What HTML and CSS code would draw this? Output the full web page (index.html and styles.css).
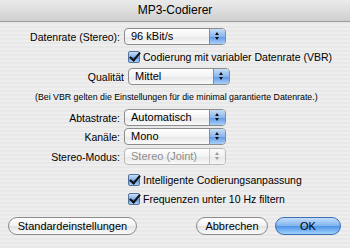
FILE: index.html
```html
<!DOCTYPE html>
<html lang="de">
<head>
    <meta charset="UTF-8">
    <title>MP3-Codierer</title>
    <link rel="stylesheet" href="styles.css">
</head>
<body>
    <div class="window">
        <div class="titlebar">MP3-Codierer</div>
        <div class="content">
            <div class="row r-rate">
                <span class="label">Datenrate (Stereo):</span>
                <div class="popup"><span>96 kBit/s</span><i class="arrows"></i></div>
            </div>
            <div class="row r-vbr">
                <span class="check"></span><span>Codierung mit variabler Datenrate (VBR)</span>
            </div>
            <div class="row r-quality">
                <span class="label">Qualität</span>
                <div class="popup"><span>Mittel</span><i class="arrows"></i></div>
            </div>
            <p class="note">(Bei VBR gelten die Einstellungen für die minimal garantierte Datenrate.)</p>
            <div class="row r-sample">
                <span class="label">Abtastrate:</span>
                <div class="popup"><span>Automatisch</span><i class="arrows"></i></div>
            </div>
            <div class="row r-chan">
                <span class="label">Kanäle:</span>
                <div class="popup"><span>Mono</span><i class="arrows"></i></div>
            </div>
            <div class="row r-stereo">
                <span class="label">Stereo-Modus:</span>
                <div class="popup disabled"><span>Stereo (Joint)</span><i class="arrows"></i></div>
            </div>
            <div class="row r-smart">
                <span class="check"></span><span>Intelligente Codierungsanpassung</span>
            </div>
            <div class="row r-filter">
                <span class="check"></span><span>Frequenzen unter 10 Hz filtern</span>
            </div>
            <div class="buttons">
                <button class="btn btn-default">Standardeinstellungen</button>
                <span class="spacer"></span>
                <button class="btn btn-cancel">Abbrechen</button>
                <button class="btn btn-ok">OK</button>
            </div>
        </div>
    </div>
</body>
</html>
```

FILE: styles.css
```css
body {
    margin: 0;
    font-family: 'Liberation Sans', Arial, sans-serif;
    font-size: 10.5px;
    color: #000;
}
.window {
    width: 350px;
    height: 248px;
    background-color: #ececec;
    background-image: repeating-linear-gradient(to bottom, #eeeeee 0, #eeeeee 2px, #e8e8e8 2px, #e8e8e8 4px);
    overflow: hidden;
    white-space: nowrap;
}
.titlebar {
    height: 21px;
    line-height: 21px;
    text-align: center;
    font-size: 12px;
    background: linear-gradient(to bottom, #ebebeb, #cfcfcf);
    border-bottom: 1px solid #9a9a9a;
}
.content {
    padding-top: 6px;
}
.row {
    display: flex;
    align-items: center;
    height: 17px;
}
.label {
    width: 124px;
    text-align: right;
    padding-right: 4px;
    box-sizing: border-box;
    flex: none;
}
.popup {
    width: 102px;
    height: 17px;
    box-sizing: border-box;
    border: 1px solid #8c8c8c;
    border-radius: 4px;
    background: linear-gradient(to bottom, #ffffff, #f3f3f3 50%, #e6e6e6 51%, #fafafa);
    display: flex;
    align-items: center;
    overflow: hidden;
    flex: none;
    font-size: 11px;
}
.popup span {
    padding-left: 6px;
    flex: 1;
    line-height: 15px;
}
.arrows {
    width: 15px;
    height: 15px;
    border-left: 1px solid #6f8fb8;
    background: linear-gradient(to bottom, #c6dcf7, #8cb6ec 50%, #5e96e2 51%, #a9d0fb);
    position: relative;
    flex: none;
}
.arrows::before, .arrows::after {
    content: "";
    position: absolute;
    left: 5px;
    border-left: 2.5px solid transparent;
    border-right: 2.5px solid transparent;
}
.arrows::before {
    top: 3px;
    border-bottom: 3px solid #111;
}
.arrows::after {
    top: 8px;
    border-top: 3px solid #111;
}
.popup.disabled {
    border-color: #b8b8b8;
    color: #8e8e8e;
}
.popup.disabled .arrows {
    border-left-color: #c4c4c4;
    background: linear-gradient(to bottom, #fafafa, #f0f0f0 50%, #e6e6e6 51%, #f6f6f6);
}
.popup.disabled .arrows::before { border-bottom-color: #9a9a9a; }
.popup.disabled .arrows::after { border-top-color: #9a9a9a; }

.check {
    width: 12px;
    height: 12px;
    box-sizing: border-box;
    border: 1px solid #54739d;
    border-radius: 2px;
    background: linear-gradient(to bottom, #c9dff8, #83b0ea 50%, #5b93df 51%, #a7cdf8);
    margin-left: 128px;
    margin-right: 3px;
    position: relative;
    flex: none;
}
.check::after {
    content: "";
    position: absolute;
    left: 3px;
    top: -2px;
    width: 4px;
    height: 9px;
    border-right: 2px solid #111;
    border-bottom: 2px solid #111;
    transform: rotate(40deg);
}
.r-vbr { margin-top: 5px; height: 14px; }
.r-quality { margin-top: 4px; padding-left: 58px; }
.r-quality .label { width: 70px; }
.note {
    margin: 6px 0 0 35px;
    font-size: 8.8px;
    height: 12px;
    line-height: 12px;
}
.r-sample { margin-top: 6px; }
.r-chan { margin-top: 2px; }
.r-stereo { margin-top: 3px; }
.r-smart { margin-top: 8px; height: 14px; }
.r-filter { margin-top: 5px; height: 14px; }
.buttons {
    display: flex;
    margin-top: 11px;
    padding: 0 9px 0 8px;
}
.spacer { flex: 1; }
.btn {
    font-family: 'Liberation Sans', Arial, sans-serif;
    font-size: 11px;
    height: 18px;
    padding: 0;
    border: 1px solid #8a8a8a;
    border-radius: 9px;
    background: linear-gradient(to bottom, #ffffff, #f1f1f1 50%, #e1e1e1 51%, #fbfbfb);
    line-height: 16px;
    color: #000;
}
.btn-default { width: 129px; }
.btn-cancel { width: 72px; margin-right: 7px; }
.btn-ok {
    width: 66px;
    border-color: #3c6eb0;
    background: linear-gradient(to bottom, #c4ddf9, #7fb3ef 50%, #4d93e8 51%, #9fd2fb);
}
```
